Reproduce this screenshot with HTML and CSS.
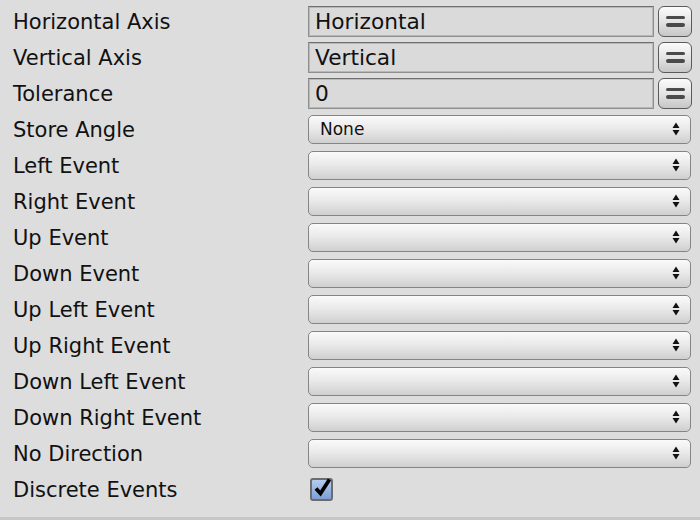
FILE: index.html
```html
<!DOCTYPE html>
<html>
<head>
<meta charset="utf-8">
<link rel="stylesheet" href="styles.css">
</head>
<body>
<div class="panel">
  <div class="row">
    <div class="label">Horizontal Axis</div>
    <div class="ctrl"><div class="field">Horizontal</div><div class="btn"><span class="bar"></span><span class="bar"></span></div></div>
  </div>
  <div class="row">
    <div class="label">Vertical Axis</div>
    <div class="ctrl"><div class="field">Vertical</div><div class="btn"><span class="bar"></span><span class="bar"></span></div></div>
  </div>
  <div class="row">
    <div class="label">Tolerance</div>
    <div class="ctrl"><div class="field">0</div><div class="btn"><span class="bar"></span><span class="bar"></span></div></div>
  </div>
  <div class="row">
    <div class="label">Store Angle</div>
    <div class="ctrl"><div class="select"><span class="sel-text">None</span><svg class="arrows" width="8" height="14" viewBox="0 0 8 14"><path d="M4 0.5 L7.5 6 L0.5 6 Z M4 13.5 L7.5 8 L0.5 8 Z" fill="#111"/></svg></div></div>
  </div>
  <div class="row">
    <div class="label">Left Event</div>
    <div class="ctrl"><div class="select"><span class="sel-text"></span><svg class="arrows" width="8" height="14" viewBox="0 0 8 14"><path d="M4 0.5 L7.5 6 L0.5 6 Z M4 13.5 L7.5 8 L0.5 8 Z" fill="#111"/></svg></div></div>
  </div>
  <div class="row">
    <div class="label">Right Event</div>
    <div class="ctrl"><div class="select"><span class="sel-text"></span><svg class="arrows" width="8" height="14" viewBox="0 0 8 14"><path d="M4 0.5 L7.5 6 L0.5 6 Z M4 13.5 L7.5 8 L0.5 8 Z" fill="#111"/></svg></div></div>
  </div>
  <div class="row">
    <div class="label">Up Event</div>
    <div class="ctrl"><div class="select"><span class="sel-text"></span><svg class="arrows" width="8" height="14" viewBox="0 0 8 14"><path d="M4 0.5 L7.5 6 L0.5 6 Z M4 13.5 L7.5 8 L0.5 8 Z" fill="#111"/></svg></div></div>
  </div>
  <div class="row">
    <div class="label">Down Event</div>
    <div class="ctrl"><div class="select"><span class="sel-text"></span><svg class="arrows" width="8" height="14" viewBox="0 0 8 14"><path d="M4 0.5 L7.5 6 L0.5 6 Z M4 13.5 L7.5 8 L0.5 8 Z" fill="#111"/></svg></div></div>
  </div>
  <div class="row">
    <div class="label">Up Left Event</div>
    <div class="ctrl"><div class="select"><span class="sel-text"></span><svg class="arrows" width="8" height="14" viewBox="0 0 8 14"><path d="M4 0.5 L7.5 6 L0.5 6 Z M4 13.5 L7.5 8 L0.5 8 Z" fill="#111"/></svg></div></div>
  </div>
  <div class="row">
    <div class="label">Up Right Event</div>
    <div class="ctrl"><div class="select"><span class="sel-text"></span><svg class="arrows" width="8" height="14" viewBox="0 0 8 14"><path d="M4 0.5 L7.5 6 L0.5 6 Z M4 13.5 L7.5 8 L0.5 8 Z" fill="#111"/></svg></div></div>
  </div>
  <div class="row">
    <div class="label">Down Left Event</div>
    <div class="ctrl"><div class="select"><span class="sel-text"></span><svg class="arrows" width="8" height="14" viewBox="0 0 8 14"><path d="M4 0.5 L7.5 6 L0.5 6 Z M4 13.5 L7.5 8 L0.5 8 Z" fill="#111"/></svg></div></div>
  </div>
  <div class="row">
    <div class="label">Down Right Event</div>
    <div class="ctrl"><div class="select"><span class="sel-text"></span><svg class="arrows" width="8" height="14" viewBox="0 0 8 14"><path d="M4 0.5 L7.5 6 L0.5 6 Z M4 13.5 L7.5 8 L0.5 8 Z" fill="#111"/></svg></div></div>
  </div>
  <div class="row">
    <div class="label">No Direction</div>
    <div class="ctrl"><div class="select"><span class="sel-text"></span><svg class="arrows" width="8" height="14" viewBox="0 0 8 14"><path d="M4 0.5 L7.5 6 L0.5 6 Z M4 13.5 L7.5 8 L0.5 8 Z" fill="#111"/></svg></div></div>
  </div>
  <div class="row">
    <div class="label">Discrete Events</div>
    <div class="ctrl"><div class="check"><svg width="19" height="19" viewBox="0 0 19 19"><path d="M3 10.5 L7.5 15.5 L16.5 1.5" fill="none" stroke="#000" stroke-width="3.8" stroke-linejoin="miter" stroke-linecap="butt"/></svg></div></div>
  </div>
</div>
<div class="footer"></div>
</body>
</html>
```
FILE: styles.css
```css
html, body {
  margin: 0;
  padding: 0;
  background: #dddddd;
  width: 700px;
  height: 520px;
  overflow: hidden;
}
body {
  font-family: "DejaVu Sans", sans-serif;
  color: #111;
  display: flex;
  flex-direction: column;
}
.panel {
  padding-top: 3px;
  height: 517px;
  box-sizing: border-box;
}
.row {
  display: grid;
  grid-template-columns: 308px 384px;
  height: 36px;
  align-items: center;
}
.label {
  padding-left: 13px;
  padding-top: 2px;
  font-size: 21px;
  line-height: 34px;
  white-space: nowrap;
}
.ctrl {
  display: flex;
  align-items: center;
  gap: 4px;
}
.field {
  box-sizing: border-box;
  width: 346px;
  height: 31px;
  border: 1px solid #8f8f8f;
  border-top-color: #6f6f6f;
  box-shadow: inset 0 0 0 1px #b8b8b8;
  background: #dadada;
  font-size: 21.7px;
  line-height: 30px;
  padding-left: 6px;
  white-space: nowrap;
}
.btn {
  box-sizing: border-box;
  width: 34px;
  height: 31px;
  border: 1.5px solid #5a5a5a;
  border-radius: 6px;
  background: linear-gradient(#fbfbfb, #e4e4e4 50%, #c6c6c6);
  display: flex;
  flex-direction: column;
  align-items: center;
  justify-content: center;
  gap: 4px;
}
.bar {
  display: block;
  width: 19px;
  height: 3.5px;
  border-radius: 2px;
  background: #4a4a4a;
}
.select {
  box-sizing: border-box;
  width: 383px;
  height: 29px;
  border: 1.5px solid #858585;
  border-radius: 5px;
  background: linear-gradient(#fafafa, #e8e8e8 50%, #cfcfcf);
  display: flex;
  align-items: center;
  justify-content: space-between;
  padding: 0 10px 0 11px;
}
.sel-text {
  font-size: 17px;
  line-height: 26px;
}
.arrows {
  display: block;
}
.check {
  box-sizing: border-box;
  width: 23px;
  height: 23px;
  margin-left: 2px;
  border: 2px solid #6c6c6c;
  border-radius: 3px;
  background: linear-gradient(#b5ccee, #7d9fd6);
  display: flex;
  align-items: center;
  justify-content: center;
}
.check svg {
  display: block;
  margin-top: -3px;
  margin-left: 2px;
  overflow: visible;
}
.footer {
  height: 3px;
  background: #c6c6c6;
}
```
